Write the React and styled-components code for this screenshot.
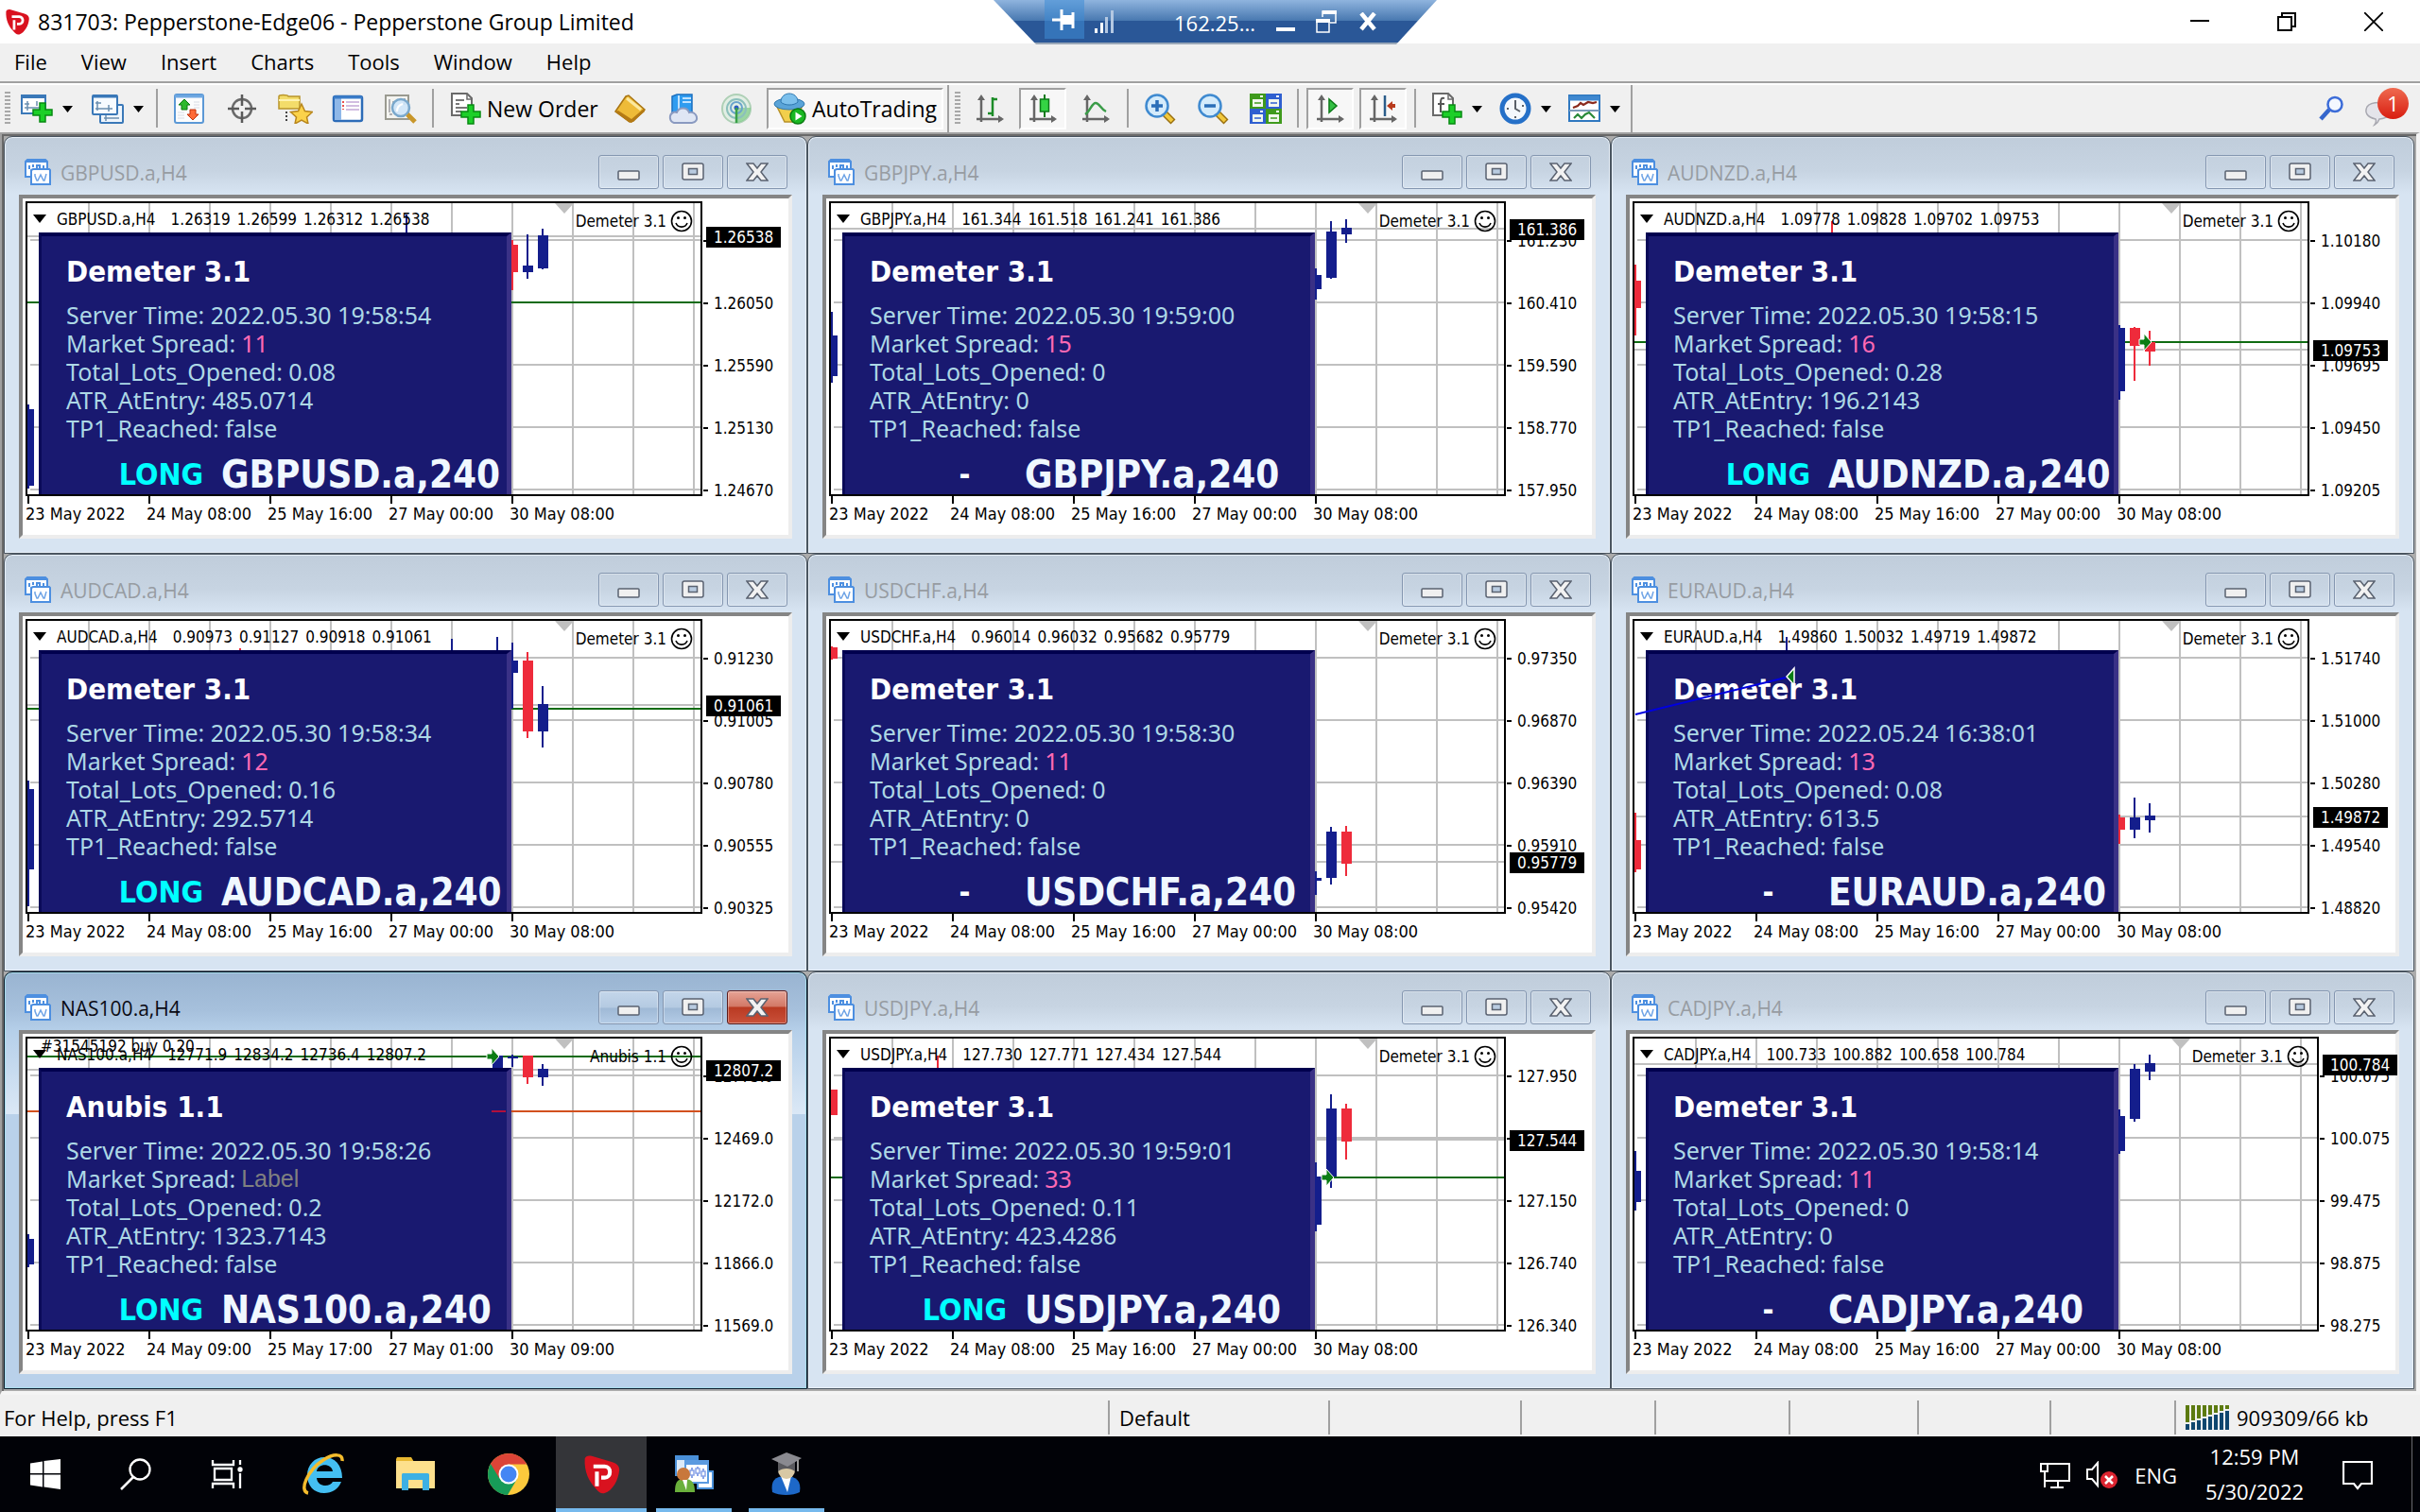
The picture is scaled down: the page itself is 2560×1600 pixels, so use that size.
import React from "react";
import styled, { createGlobalStyle, css } from "styled-components";

const UI_FONT = `"Open Sans", "Noto Sans", sans-serif`;
const CHART_FONT = `"DejaVu Sans Condensed", "Noto Sans", sans-serif`;
const PANEL_FONT = `"Noto Sans", "Open Sans", sans-serif`;
const BLUE = "#141e8c";
const RED = "#ee2b3b";
const GREEN = "#0f6b12";

const GlobalStyle = createGlobalStyle`
  * { box-sizing: border-box; }
  html, body { margin: 0; padding: 0; }
  body { background: #f0f0f0; font-family: ${UI_FONT}; font-size: 22px; color: #000; overflow: hidden; }
  button { font: inherit; color: inherit; border: 0; background: none; padding: 0; margin: 0; }
  svg { display: block; flex: none; }
`;

/* ---------- page frame ---------- */

const Page = styled.div`
  display: flex;
  flex-direction: column;
  height: 100vh;
  min-width: 1800px;
`;

const TitleBar = styled.header`
  display: flex;
  align-items: center;
  height: 46px;
  padding: 0 3px 0 4px;
  gap: 8px;
  background: #fff;
`;

const AppTitle = styled.h1`
  flex: 1;
  margin: 0;
  font-size: 23px;
  font-weight: 400;
  line-height: 32px;
  white-space: nowrap;
`;

const CaptionButton = styled.button`
  display: flex;
  align-items: center;
  justify-content: center;
  width: 92px;
  height: 46px;
`;
const Captions = styled.div`display: flex;`;

const MenuBar = styled.nav`
  display: flex;
  align-items: center;
  gap: 36px;
  height: 40px;
  padding: 0 0 2px 15px;
  background: #f0f0f0;
`;

const MenuItem = styled.button`
  line-height: 32px;
`;

const Toolbar = styled.div`
  display: flex;
  align-items: stretch;
  height: 54px;
  border-top: 2px solid #a0a0a0;
  box-shadow: inset 0 2px 0 #fff;
  background: #f0f0f0;
  padding: 2px 0 0 5px;
`;

const Grip = styled.span`
  width: 6px;
  margin: 7px 0;
  background: repeating-linear-gradient(#a8a8a8 0 2px, #f0f0f0 2px 4px);
`;

const Separator = styled.span`
  width: 2px;
  margin: ${(p) => (p.$full ? "0 6px 0 4px" : "4px 5px 5px")};
  background: #a0a0a0;
`;

const ToolGroup = styled.div`
  display: flex;
  align-items: center;
  gap: ${(p) => p.$gap || 0}px;
  padding-left: ${(p) => p.$left || 0}px;
  padding-right: ${(p) => p.$right || 0}px;
`;

const pressed = css`
  border-top: 2px solid #a0a0a0;
  border-left: 2px solid #a0a0a0;
  border-right: 2px solid #fff;
  border-bottom: 2px solid #fff;
  background: #f7f7f7;
`;

const ToolButton = styled.button`
  display: flex;
  align-items: center;
  justify-content: center;
  width: 50px;
  height: 44px;
  margin: 0 3px;
  ${(p) => p.$pressed && pressed}
`;

const DropButton = styled.button`
  display: flex;
  align-items: center;
  gap: 10px;
  height: 44px;
`;

const TextToolButton = styled.button`
  display: flex;
  align-items: center;
  gap: 6px;
  height: 44px;
  width: ${(p) => p.$width}px;
  padding-left: ${(p) => (p.$pressed ? 5 : 12)}px;
  margin-left: ${(p) => (p.$pressed ? 4 : 0)}px;
  font-size: 23px;
  white-space: nowrap;
  ${(p) => p.$pressed && pressed}
`;

const ToolbarEnd = styled.div`
  display: flex;
  align-items: center;
  gap: 22px;
  margin-left: auto;
  padding-right: 12px;
`;

const AlertButton = styled.button`
  position: relative;
  width: 46px;
  height: 44px;
`;

const AlertCount = styled.span`
  position: absolute;
  right: 0;
  top: 0;
  width: 33px;
  height: 33px;
  border-radius: 50%;
  background: linear-gradient(#ef6a50, #d81d10);
  color: #fff;
  line-height: 32px;
  text-align: center;
`;

/* ---------- remote session bar ---------- */

const SessionBar = styled.div`
  position: absolute;
  top: 0;
  left: calc(50% - 229px);
  display: flex;
  align-items: center;
  width: 469px;
  height: 47px;
  padding: 0 62px 2px 54px;
  clip-path: polygon(0 0, 100% 0, 426px 100%, 45px 100%);
  background: linear-gradient(#8fb4de 0, #4878b0 22px, #2a5797 22px, #2a5797 45px, #9aa8b8 45px);
  color: #fff;
`;

const PinButton = styled.button`
  display: flex;
  align-items: center;
  justify-content: center;
  align-self: flex-start;
  width: 42px;
  height: 41px;
  margin-right: 10px;
  background: rgba(62, 140, 214, 0.55);
`;

const SessionHost = styled.span`
  flex: 1;
  padding: 2px 22px 0 0;
  text-align: right;
`;

const SessionButtons = styled.div`
  display: flex;
  gap: 22px;
  align-items: center;
`;

/* ---------- chart windows ---------- */

const Workspace = styled.main`
  flex: 1;
  min-height: 0;
  display: grid;
  grid-template-columns: repeat(3, minmax(0, 1fr));
  grid-template-rows: repeat(3, minmax(0, 1fr));
  padding: 2px;
  border-style: solid;
  border-width: 2px 4px 4px 2px;
  border-color: #a0a0a0 #f4f4f4 #f4f4f4 #a0a0a0;
  background: #ababab;
  box-shadow: inset 0 2px 0 #696969, inset 2px 0 0 #696969;
`;

const Window = styled.section`
  display: flex;
  flex-direction: column;
  min-width: 0;
  border: 1px solid ${(p) => (p.$active ? "#0c1c2c" : "#4a5560")};
  border-radius: 9px 9px 0 0;
  padding: 0 15px 15px;
  background: ${(p) =>
    p.$active
      ? "linear-gradient(#99b4d1 0, #a6c0dc 40px, #b5cfe9 62px, #dbe8f6 150px, #b9d1ea 150px)"
      : "linear-gradient(#c0cddb 0, #c7d4e2 36px, #d7e4f2 60px)"};
  box-shadow: inset 0 0 0 1px ${(p) => (p.$active ? "#a8dcea" : "#e8f0f8")};
`;

const WindowHeader = styled.header`
  display: flex;
  align-items: flex-start;
  height: 61px;
  padding: 19px 5px 0 6px;
`;

const ChartIconBox = styled.span`
  display: block;
  padding-top: 4px;
`;

const WindowTitle = styled.h2`
  flex: 1;
  margin: 0 0 0 10px;
  font-size: 21px;
  font-weight: 400;
  line-height: 38px;
  color: ${(p) => (p.$active ? "#0a0a14" : "#979ca2")};
`;

const WindowButtons = styled.div`
  display: flex;
  gap: 4px;
`;

const WindowButton = styled.button`
  display: flex;
  align-items: center;
  justify-content: center;
  width: 64px;
  height: 36px;
  border: 1px solid #8496b0;
  border-radius: 3px;
  box-shadow: inset 0 0 0 1px rgba(255, 255, 255, 0.35);
  background: ${(p) => (p.$active ? "linear-gradient(#c4d6ea 0, #b4cae2 17px, #9fb9d6 18px, #b4cce6 100%)" : "none")};
  ${(p) =>
    p.$close &&
    p.$active &&
    css`
      border-color: #5a1a1a;
      background: linear-gradient(#e6a496 0, #d27866 16px, #b93a22 17px, #c9503a 100%);
    `}
`;

const Client = styled.div`
  flex: 1;
  min-height: 0;
  display: grid;
  grid-template-columns: minmax(0, 1fr) ${(p) => p.$axis}px;
  grid-template-rows: minmax(0, 1fr) 41px;
  padding: 3px 0 0 3px;
  background: #fff;
  border: 4px solid;
  border-color: #858585 #ededed #ededed #858585;
  font-family: ${CHART_FONT};
  font-size: 17px;
`;

const Plot = styled.div`
  position: relative;
  border: 2px solid #000;
`;

const Backdrop = styled.svg`
  position: absolute;
  inset: 0;
  width: 100%;
  height: 100%;
  overflow: hidden;
`;

const PlotHeader = styled.div`
  position: relative;
  display: flex;
  align-items: center;
  height: 33px;
  padding: 0 8px 0 6px;
  line-height: 24px;
  white-space: nowrap;
`;

const Quotes = styled.div`
  display: flex;
  flex: 1;
  gap: 7px;
  margin-left: 11px;
`;

const Symbol = styled.span`margin-right: 9px;`;

const Expert = styled.div`
  display: flex;
  align-items: center;
  gap: 4px;
  padding-top: 5px;
`;

const ShiftMark = styled.svg`
  position: absolute;
  top: 0;
  right: 134px;
`;

const OrderNote = styled.span`
  position: absolute;
  left: 14px;
  top: -4px;
  line-height: 24px;
  white-space: nowrap;
`;

const Panel = styled.div`
  position: absolute;
  left: 12px;
  top: 31px;
  bottom: 0;
  width: 500px;
  padding: 17px 0 0 26px;
  background: #191970;
  border-top: 4px solid #00004e;
  border-left: 3px solid #0a0a58;
  border-right: 5px solid #3a3186;
  color: #add8e6;
  font-family: ${PANEL_FONT};
  font-size: 25px;
  line-height: 30px;
  white-space: nowrap;
`;

const PanelTitle = styled.h3`
  margin: 0 0 11px;
  color: #fff;
  font-family: ${CHART_FONT};
  font-size: 31px;
  font-weight: 700;
  line-height: 40px;
`;

const PanelLine = styled.p`
  display: flex;
  gap: 6px;
  margin: 0;
`;

const Spread = styled.span`
  color: #ff69b4;
`;
const SpreadLabel = styled.span`
  color: #808080;
  font-family: "Liberation Sans", sans-serif;
`;

const PanelFooter = styled.div`
  display: flex;
  align-items: center;
  gap: 18px;
  height: 40px;
  margin: 14px 0 0 55px;
  font-family: ${CHART_FONT};
  line-height: 40px;
  font-weight: 700;
`;

const Side = styled.span`
  width: 91px;
  text-align: center;
  font-size: 32px;
  color: ${(p) => (p.$long ? "#00ffff" : "#fff")};
`;

const Pair = styled.span`
  font-size: 40px;
  color: #f0f8ff;
`;

const PriceAxis = styled.div`
  position: relative;
  padding-top: 9px;
`;

const PriceLabel = styled.div`
  display: flex;
  align-items: center;
  gap: 6px;
  height: 66px;
  padding-left: 1px;

  &::before {
    content: "";
    width: 5px;
    height: 2px;
    background: #000;
  }
`;

const PriceTag = styled.div`
  position: absolute;
  left: 4px;
  width: 79px;
  height: 22px;
  padding-left: 8px;
  background: #000;
  color: #fff;
  line-height: 22px;
`;

const DateAxis = styled.div`
  display: flex;
  font-size: 18px;
`;

const DateLabel = styled.div`
  width: 128px;
  line-height: 22px;
  white-space: nowrap;

  &::before {
    content: "";
    display: block;
    width: 2px;
    height: 8px;
    margin-left: 2px;
    background: #000;
  }
`;

/* ---------- status bar and task bar ---------- */

const StatusBar = styled.footer`
  display: flex;
  align-items: center;
  height: 44px;
  background: #f0f0f0;
`;

const StatusCell = styled.div`
  display: flex;
  align-items: center;
  gap: 8px;
  height: 36px;
  margin-top: 4px;
  line-height: 32px;
  white-space: nowrap;
  ${(p) =>
    p.$width
      ? css`width: ${p.$width}px; padding-left: 10px; border-left: 2px solid #a0a0a0;`
      : css`flex: 1; padding-left: 4px;`}
`;

const TaskBar = styled.footer`
  display: flex;
  height: 80px;
  background: #010207;
  color: #fff;
`;

const TaskButton = styled.button`
  display: flex;
  align-items: center;
  justify-content: center;
  width: 96px;
  background: ${(p) => (p.$focused ? "#343539" : "none")};
`;

const TaskApps = styled.div`
  display: flex;
  gap: 2px;
  margin-left: 6px;
`;

const RunningButton = styled(TaskButton)`
  position: relative;
  &::after {
    content: "";
    position: absolute;
    bottom: 0;
    left: ${(p) => (p.$focused ? 0 : 8)}px;
    right: ${(p) => (p.$focused ? 0 : 8)}px;
    height: 4px;
    background: #76b9ed;
  }
`;

const Tray = styled.div`
  display: flex;
  align-items: center;
  margin-left: auto;
  gap: 17px;
`;

const TrayButton = styled.button`
  padding-top: 2px;
`;

const Clock = styled.time`
  display: block;
  width: 112px;
  margin: 0 20px 0 9px;
  text-align: center;
  line-height: 37px;
`;

const ShowDesktop = styled.button`
  width: 9px;
  height: 80px;
  margin-left: 24px;
  border-left: 1px solid #6a6a6e;
`;

/* ---------- icons ---------- */

const Caret = () => (
  <svg width="11" height="7" viewBox="0 0 11 7"><path d="M0 0h11L5.5 7z" /></svg>
);

const Plus = ({ x, y }) => (
  <path
    transform={`translate(${x} ${y})`}
    d="M7 0h6v7h7v6h-7v7H7v-7H0V7h7z"
    fill="#1ccf28"
    stroke="#078a12"
    strokeWidth="1.5"
  />
);

const PepperLogo = ({ w, h }) => (
  <svg width={w} height={h} viewBox="0 0 44 46">
    <path d="M3 5C4 2 7 1 11 2l24 7c6 2 8 5 8 9-1 12-8 24-17 27-4 1-7-1-10-5C8 32 2 20 3 5z" fill="#d9121f" />
    <path d="M17 37V20M13 14h13c8 0 8 13 0 13h-4" fill="none" stroke="#fff" strokeWidth="4.5" />
  </svg>
);

const ChartWinIcon = () => (
  <svg width="28" height="28" viewBox="0 0 28 28">
    <path d="M1 3l2-2h19l2 2v16H1z" fill="#fff" stroke="#4d8fe0" strokeWidth="2" />
    <path d="M2 3h21" stroke="#4d8fe0" strokeWidth="2" />
    <path d="M5 11V7M9 9V6M13 10V7h3v3M20 10V7" stroke="#4d8fe0" strokeWidth="2" fill="none" />
    <path d="M7 12l2-1h17l1 1v15H7z" fill="#fff" stroke="#4d8fe0" strokeWidth="2" />
    <path d="M11 16v2l2 5h1l3-6 3 6h1l2-7" stroke="#6fa4e6" strokeWidth="1.5" fill="none" />
  </svg>
);

const NewChart = () => (
  <svg width="34" height="32" viewBox="0 0 34 32">
    <rect x="1" y="2" width="25" height="19" fill="#fff" stroke="#3a78b8" strokeWidth="2" />
    <path d="M0 3h27" stroke="#3a78b8" strokeWidth="4" />
    <path d="M7 8v10M4 15h17M4 11h5M17 8v5" stroke="#6b8fb0" strokeWidth="1.5" />
    <Plus x={13} y={10} />
  </svg>
);
const Profiles = () => (
  <svg width="34" height="32" viewBox="0 0 34 32">
    <rect x="9" y="12" width="24" height="19" rx="1" fill="#eef5fc" stroke="#3a78b8" strokeWidth="2" />
    <rect x="1" y="2" width="26" height="20" rx="1" fill="#f7fbff" stroke="#3a78b8" strokeWidth="2" />
    <path d="M1 3h26" stroke="#3a78b8" strokeWidth="3" />
    <path d="M6 8v10M4 16h18M4 10h6M18 12v7M13 26h16M15 23v6" stroke="#6b8fb0" strokeWidth="1.5" />
  </svg>
);
const MarketWatch = () => (
  <svg width="34" height="32" viewBox="0 0 34 32">
    <rect x="2" y="1" width="30" height="30" rx="2" fill="#fbfcfd" stroke="#5b98d6" strokeWidth="2" />
    <path d="M2 3h30" stroke="#6fa8e2" strokeWidth="3" />
    <path d="M22 9h6M22 12h6M22 15h6M5 20h7M5 23h7M5 26h7" stroke="#d8dce4" />
    <path d="M12 6l6 6h-3v5H9v-5H6z" fill="#2eb82e" stroke="#0d7a12" />
    <path d="M21 28l6-6h-3v-5h-6v5h-3z" fill="#ff6a36" stroke="#c2330c" />
  </svg>
);
const Crosshair = () => (
  <svg width="34" height="32" viewBox="0 0 34 32">
    <circle cx="17" cy="16" r="10" fill="none" stroke="#6a6a6a" strokeWidth="2.5" />
    <path d="M17 1v12M17 19v12M2 16h12M20 16h12" stroke="#5a5a5a" strokeWidth="2.5" />
  </svg>
);
const Navigator = () => (
  <svg width="38" height="32" viewBox="0 0 38 32">
    <path d="M2 3c0-2 9-2 10 0h12v13H2z" fill="#f3dc6a" stroke="#b8942a" strokeWidth="1.5" />
    <path d="M2 7h22" stroke="#fff3b0" strokeWidth="2" />
    <path d="M10 19v11" stroke="#444" strokeDasharray="2 2" strokeWidth="2" />
    <path d="M26 11l3.5 7.5 8 1-6 5.5 1.5 7-7-4-7 4 1.5-7-6-5.5 8-1z" fill="#fbd24a" stroke="#b8861c" strokeWidth="1.5" />
  </svg>
);
const DataWindow = () => (
  <svg width="34" height="32" viewBox="0 0 34 32">
    <rect x="2" y="3" width="30" height="26" rx="2" fill="#fff" stroke="#2d6cb8" strokeWidth="2.5" />
    <rect x="3" y="4" width="7" height="24" fill="#8fb8e8" />
    <path d="M2 4h30" stroke="#3a7cc8" strokeWidth="3" />
    <path d="M12 8v9" stroke="#e01818" strokeWidth="1.5" strokeDasharray="2 2" />
    <path d="M15 9h14M15 13h14M15 17h14" stroke="#c4a8d8" strokeWidth="1.5" />
  </svg>
);
const Tester = () => (
  <svg width="34" height="32" viewBox="0 0 34 32">
    <path d="M1 2h24v25H1z" fill="#f4f4f0" stroke="#9a9a90" strokeWidth="2" />
    <path d="M5 6v14M9 8v5M21 5v7M5 22h3" stroke="#9a9aa0" strokeWidth="1.5" />
    <circle cx="17" cy="15" r="9" fill="#cfe6f8" fillOpacity=".9" stroke="#7aa8cc" strokeWidth="2.5" />
    <path d="M24 22l8 8" stroke="#c8962a" strokeWidth="5" />
    <path d="M13 19c0-4 2-7 6-8" stroke="#fff" strokeWidth="2" fill="none" />
  </svg>
);
const Sheet = () => (
  <>
    <path d="M2 2h16l5 5v18H2z" fill="#fff" stroke="#6a6a6a" strokeWidth="2" />
    <path d="M18 2v6h5" fill="none" stroke="#6a6a6a" strokeWidth="1.5" />
  </>
);
const NewOrderIcon = () => (
  <svg width="33" height="36" viewBox="0 0 33 36">
    <Sheet />
    <path d="M6 9h9M6 13h4M6 17h12M6 21h6" stroke="#777" strokeWidth="2" />
    <Plus x={12} y={14} />
  </svg>
);
const Editor = () => (
  <svg width="34" height="32" viewBox="0 0 34 32">
    <path d="M1 19L12 3l3-1 17 15-12 12-4 1z" fill="#eebb38" stroke="#a87412" strokeWidth="1.5" />
    <path d="M1 19l3-1 14 9 13-11 1 3-14 12-3-1z" fill="#b47a14" />
    <path d="M13 5l15 12" stroke="#fce9a0" strokeWidth="3" />
  </svg>
);
const Hosting = () => (
  <svg width="34" height="32" viewBox="0 0 34 32">
    <path d="M5 3l5-2h16v20H5z" fill="#2f9cf0" stroke="#1d70c0" strokeWidth="1.5" />
    <path d="M12 2v18M16 5h9M16 9h9" stroke="#bfe2ff" strokeWidth="2" />
    <path d="M7 31a6 6 0 0 1-1-11c2-1 3 0 4 0 2-6 11-6 13 0 8-2 12 10 3 11z" fill="#dfe6f4" stroke="#8a9ac0" strokeWidth="2" />
  </svg>
);
const Signals = () => (
  <svg width="34" height="32" viewBox="0 0 34 32">
    <circle cx="17" cy="16" r="15" fill="#e2eee4" stroke="#aed0b6" strokeWidth="2" />
    <path d="M17 15h15c0 8-6 15-14 16z" fill="#7ccc84" fillOpacity=".7" />
    <circle cx="17" cy="16" r="10" fill="none" stroke="#8cc0bc" strokeWidth="2" />
    <circle cx="17" cy="15" r="6" fill="none" stroke="#6aa4cc" strokeWidth="2" />
    <circle cx="17" cy="15" r="2.5" fill="#2a5cc0" />
    <path d="M17 15v16" stroke="#3aa048" strokeWidth="2.5" />
  </svg>
);
const AutoIcon = () => (
  <svg width="35" height="34" viewBox="0 0 35 34">
    <path d="M3 13h28l-7 18H12z" fill="#f2cf4c" stroke="#b8922a" strokeWidth="1.5" />
    <ellipse cx="17" cy="12" rx="16" ry="6" fill="#5aa4d8" stroke="#2f78b0" />
    <path d="M8 10c0-12 18-12 18 0-4 4-14 4-18 0z" fill="#7cc0ec" stroke="#2f78b0" />
    <circle cx="26" cy="25" r="8" fill="#19b822" stroke="#0a7a10" strokeWidth="1.5" />
    <path d="M23.5 20.5v9l7-4.5z" fill="#fff" />
  </svg>
);
const Axes = ({ children }) => (
  <svg width="30" height="30" viewBox="0 0 30 30">
    <path d="M6 3v26M1 26h27" stroke="#666" strokeWidth="2.5" />
    <path d="M6 0l4 6H2zM30 26l-6-4v8z" fill="#666" />
    {children}
  </svg>
);
const Magnifier = ({ minus }) => (
  <svg width="34" height="34" viewBox="0 0 34 34">
    <path d="M22 22l9 9" stroke="#9a7010" strokeWidth="7" />
    <path d="M22 22l8 8" stroke="#f2c83c" strokeWidth="4" />
    <circle cx="14" cy="14" r="11.5" fill="#d4ebfb" stroke="#3f8ad0" strokeWidth="2.5" />
    <path d={minus ? "M8 14h12" : "M8 14h12M14 8v12"} stroke="#2a6eb8" strokeWidth="3.5" />
  </svg>
);
const Tiles = () => (
  <svg width="34" height="32" viewBox="0 0 34 32">
    {[[0, 0, "#3f9a1c"], [17, 0, "#2f5fd0"], [0, 16, "#2f5fd0"], [17, 16, "#3f9a1c"]].map(([x, y, c]) => (
      <g key={`${x}-${y}`} transform={`translate(${x} ${y})`}>
        <path d="M0 0h17v16H0z" fill={c} />
        <path d="M3 6h11v8H3z" fill="#f2f7ee" />
        <path d="M5 10h7" stroke={c} strokeWidth="1.5" />
        <path d="M11 3h3" stroke="#fff" strokeWidth="2" />
      </g>
    ))}
  </svg>
);
const Indicators = () => (
  <svg width="33" height="36" viewBox="0 0 33 36">
    <Sheet />
    <path d="M14 7c-4-1-4 2-4 6v9M7 13h7" stroke="#555" strokeWidth="2" fill="none" />
    <Plus x={12} y={14} />
  </svg>
);
const ClockIcon = () => (
  <svg width="34" height="34" viewBox="0 0 34 34">
    <circle cx="17" cy="17" r="14" fill="#f4f8fc" stroke="#2570c8" strokeWidth="5" />
    <path d="M17 8v9l5 3M8 17h2M17 27v-2M26 14h-2" stroke="#5a6068" strokeWidth="2" fill="none" />
  </svg>
);
const Templates = () => (
  <svg width="34" height="30" viewBox="0 0 34 30">
    <rect x="1" y="1" width="32" height="27" fill="#fff" stroke="#2f78c0" strokeWidth="2" />
    <path d="M1 4h32" stroke="#3f88d0" strokeWidth="5" />
    <path d="M1 17h32" stroke="#7a9ab8" strokeWidth="2" />
    <path d="M5 14l5-2 3-3 3 2 5-3 5 1 4-1" stroke="#8a2a1c" strokeWidth="2.2" fill="none" />
    <path d="M6 25l4-4 4 4 4-4 4-2 6 6" stroke="#2a8a3a" strokeWidth="2.2" fill="none" />
  </svg>
);
const SearchIcon = () => (
  <svg width="28" height="28" viewBox="0 0 28 28">
    <path d="M12 15L3 25" stroke="#3566cc" strokeWidth="4.5" />
    <circle cx="18" cy="9.5" r="7.5" fill="#f4f8ff" stroke="#3c6cd8" strokeWidth="2.5" />
  </svg>
);
const Bubble = () => (
  <svg width="46" height="44" viewBox="0 0 46 44">
    <path d="M10 39c2-3 2-4 1-6C2 31-1 26 2 20 6 14 24 14 27 20c3 7-3 12-12 13-1 3-3 5-5 6z" fill="#e4e4ea" stroke="#a8a8b0" strokeWidth="1.5" />
  </svg>
);

const MinGlyph = () => (
  <svg width="24" height="22" viewBox="0 0 24 22">
    <rect x="1" y="10" width="22" height="9" rx="1" fill="#f0f0f0" stroke="#5a6270" strokeWidth="1.5" />
  </svg>
);
const MaxGlyph = () => (
  <svg width="24" height="20" viewBox="0 0 24 20">
    <rect x="1" y="1" width="22" height="17" rx="2" fill="#f0f0f0" stroke="#5a6270" strokeWidth="1.5" />
    <rect x="7.5" y="6.5" width="9" height="6" fill="#b9cbe0" stroke="#5a6270" strokeWidth="1.5" />
  </svg>
);
const CloseGlyph = () => (
  <svg width="24" height="20" viewBox="0 0 24 20">
    <path d="M1 1h7l4 5 4-5h7l-7 9 7 9h-7l-4-5-4 5H1l7-9z" fill="#f2f2f2" stroke="#5a6270" strokeWidth="1.5" />
  </svg>
);
const Smiley = () => (
  <svg width="24" height="24" viewBox="0 0 24 24">
    <circle cx="12" cy="12" r="10.5" fill="none" stroke="#000" strokeWidth="1.6" />
    <path d="M6 14c2 5.5 10 5.5 12 0" fill="none" stroke="#000" strokeWidth="1.6" />
    <circle cx="8.5" cy="8.5" r="1.5" /><circle cx="15.5" cy="8.5" r="1.5" />
  </svg>
);

/* ---------- chart data: candles are [x, high, top, bottom, low, colour] ---------- */

const H8 = ["23 May 2022", "24 May 08:00", "25 May 16:00", "27 May 00:00", "30 May 08:00"];
const H9 = ["23 May 2022", "24 May 09:00", "25 May 17:00", "27 May 01:00", "30 May 09:00"];

const CHARTS = [
  {
    symbol: "GBPUSD.a", quotes: ["1.26319", "1.26599", "1.26312", "1.26538"], time: "2022.05.30 19:58:54",
    spread: "11", lots: "0.08", atr: "485.0714", long: true, price: 35, line: 105,
    axis: ["", "1.26050", "1.25590", "1.25130", "1.24670"],
    candles: [[1, 213, 218, 299, 302, BLUE], [513, 39, 44, 73, 92, RED], [529, 33, 66, 73, 80, BLUE], [545, 27, 34, 69, 70, BLUE]],
    wicks: [[401, 12, BLUE]],
  },
  {
    symbol: "GBPJPY.a", quotes: ["161.344", "161.518", "161.241", "161.386"], time: "2022.05.30 19:59:00",
    spread: "15", lots: "0", atr: "0", price: 27,
    axis: ["161.230", "160.410", "159.590", "158.770", "157.950"],
    candles: [[1, 115, 140, 183, 190, BLUE], [513, 69, 76, 91, 102, BLUE], [529, 19, 30, 79, 80, BLUE], [545, 17, 26, 33, 42, BLUE]],
  },
  {
    symbol: "AUDNZD.a", quotes: ["1.09778", "1.09828", "1.09702", "1.09753"], time: "2022.05.30 19:58:15",
    spread: "16", lots: "0.28", atr: "196.2143", long: true, price: 155, line: 147, arrow: [534, 147],
    axis: ["1.10180", "1.09940", "1.09695", "1.09450", "1.09205"],
    candles: [[1, 65, 82, 111, 140, RED], [513, 129, 132, 199, 208, BLUE], [529, 131, 132, 151, 188, RED], [545, 135, 147, 157, 172, RED]],
    wicks: [[209, 19, RED]],
  },
  {
    symbol: "AUDCAD.a", quotes: ["0.90973", "0.91127", "0.90918", "0.91061"], time: "2022.05.30 19:58:34",
    spread: "12", lots: "0.16", atr: "292.5714", long: true, price: 89, line: 93,
    axis: ["0.91230", "0.91005", "0.90780", "0.90555", "0.90325"],
    candles: [[1, 169, 178, 263, 302, BLUE], [513, 23, 42, 55, 93, BLUE], [529, 33, 42, 117, 124, RED], [545, 69, 88, 117, 134, BLUE]],
    wicks: [[449, 19, BLUE], [497, 17, BLUE], [225, 29, RED]],
  },
  {
    symbol: "USDCHF.a", quotes: ["0.96014", "0.96032", "0.95682", "0.95779"], time: "2022.05.30 19:58:30",
    spread: "11", lots: "0", atr: "0", price: 255,
    axis: ["0.97350", "0.96870", "0.96390", "0.95910", "0.95420"],
    candles: [[1, 27, 28, 40, 41, RED], [513, 265, 272, 275, 290, BLUE], [529, 218, 223, 272, 279, BLUE], [545, 217, 223, 257, 270, RED]],
  },
  {
    symbol: "EURAUD.a", quotes: ["1.49860", "1.50032", "1.49719", "1.49872"], time: "2022.05.24 16:38:01",
    spread: "13", lots: "0.08", atr: "613.5", price: 207, trend: true,
    axis: ["1.51740", "1.51000", "1.50280", "1.49540", "1.48820"],
    candles: [[1, 203, 232, 263, 266, RED], [513, 205, 208, 221, 236, RED], [529, 187, 208, 221, 230, BLUE], [545, 193, 206, 211, 224, BLUE]],
    wicks: [[161, 17, BLUE]],
  },
  {
    symbol: "NAS100.a", expert: "Anubis 1.1", quotes: ["12771.9", "12834.2", "12736.4", "12807.2"], time: "2022.05.30 19:58:26",
    lots: "0.2", atr: "1323.7143", long: true, active: true, price: 33, line: 19, stop: 77, arrow: [486, 19],
    note: "#31545192 buy 0.20", dates: H9,
    axis: ["12775.0", "12469.0", "12172.0", "11866.0", "11569.0"],
    candles: [[1, 207, 212, 239, 242, BLUE], [497, 17, 18, 32, 32, BLUE], [513, 17, 19, 21, 30, BLUE], [529, 18, 18, 41, 48, RED], [545, 27, 32, 41, 50, BLUE]],
  },
  {
    symbol: "USDJPY.a", quotes: ["127.730", "127.771", "127.434", "127.544"], time: "2022.05.30 19:59:01",
    spread: "33", lots: "0.11", atr: "423.4286", long: true, price: 107, line: 147, arrow: [519, 147],
    axis: ["127.950", "", "127.150", "126.740", "126.340"],
    candles: [[1, 54, 54, 81, 81, RED], [513, 131, 146, 197, 204, BLUE], [529, 59, 74, 146, 158, BLUE], [545, 69, 74, 109, 128, RED]],
    wicks: [[113, 18, RED]],
  },
  {
    symbol: "CADJPY.a", quotes: ["100.733", "100.882", "100.658", "100.784"], time: "2022.05.30 19:58:14",
    spread: "11", lots: "0", atr: "0", price: 27, axisWidth: 81,
    axis: ["100.675", "100.075", "99.475", "98.875", "98.275"],
    candles: [[1, 119, 140, 173, 182, BLUE], [513, 75, 82, 119, 122, BLUE], [529, 27, 32, 85, 88, BLUE], [545, 17, 26, 35, 44, BLUE]],
  },
];

const COLS = Array.from({ length: 11 }, (_, i) => 64 + i * 64);
const ROWS = [38, 104, 170, 236, 302];

function ChartDrawing({ c }) {
  return (
    <Backdrop aria-hidden="true" shapeRendering="crispEdges">
      {COLS.map((x) => <rect key={x} x={x} y="0" width="2" height="100%" fill="#c0c0c0" />)}
      {ROWS.map((y) => <rect key={y} x="3" y={y} width="100%" height="2" fill="#c0c0c0" />)}
      <rect x="0" y={c.price - 1} width="100%" height="2" fill="#c0c0c0" />
      {c.line && <rect x="0" y={c.line - 1} width="100%" height="2" fill={GREEN} />}
      {c.stop && <rect x="0" y={c.stop - 1} width="100%" height="2" fill="#d2501e" />}
      {(c.wicks || []).map(([x, y, f]) => <rect key={x} x={x - 1} y={y} width="2" height={31 - y} fill={f} />)}
      {c.candles.map(([x, hi, top, bot, lo, f]) => (
        <g key={x} fill={f}>
          <rect x={x - 1} y={hi} width="2" height={lo - hi} />
          <rect x={x - 5} y={top} width="11" height={Math.max(bot - top, 1)} />
        </g>
      ))}
    </Backdrop>
  );
}

function Marks({ c }) {
  return (
    <Backdrop aria-hidden="true">
      {c.arrow && (
        <path
          transform={`translate(${c.arrow[0]} ${c.arrow[1]})`}
          d="M0-3h5v-6l8 9-8 9V3H0z"
          fill="#0b7d14"
          stroke="#fff"
          strokeWidth="1"
        />
      )}
      {c.trend && (
        <>
          <path d="M1 99L160 60" stroke="#0000e0" strokeWidth="2" />
          <path d="M169 50v18l-8-9z" fill="#0b7d14" stroke="#fff" strokeWidth="1.5" />
        </>
      )}
      {c.stop && <path d="M491 77h15" stroke="#b0103c" strokeWidth="2" />}
    </Backdrop>
  );
}

function ChartWindow({ c }) {
  const expert = c.expert || "Demeter 3.1";
  return (
    <Window $active={c.active}>
      <WindowHeader>
        <ChartIconBox><ChartWinIcon /></ChartIconBox>
        <WindowTitle $active={c.active}>{c.symbol},H4</WindowTitle>
        <WindowButtons>
          <WindowButton $active={c.active} aria-label="Minimize chart"><MinGlyph /></WindowButton>
          <WindowButton $active={c.active} aria-label="Maximize chart"><MaxGlyph /></WindowButton>
          <WindowButton $active={c.active} $close aria-label="Close chart"><CloseGlyph /></WindowButton>
        </WindowButtons>
      </WindowHeader>
      <Client $axis={c.axisWidth || 91}>
        <Plot>
          <ChartDrawing c={c} />
          <ShiftMark width="20" height="11" viewBox="0 0 20 11"><path d="M0 0h20L10 11z" fill="#c0c0c0" /></ShiftMark>
          {c.note && <OrderNote>{c.note}</OrderNote>}
          <PlotHeader>
            <svg width="14" height="9" viewBox="0 0 14 9"><path d="M0 0h14L7 9z" /></svg>
            <Quotes>
              <Symbol>{c.symbol},H4</Symbol>
              {c.quotes.map((q) => <span key={q}>{q}</span>)}
            </Quotes>
            <Expert>{expert}<Smiley /></Expert>
          </PlotHeader>
          <Panel>
            <PanelTitle>{expert}</PanelTitle>
            <PanelLine>Server Time: {c.time}</PanelLine>
            <PanelLine>
              Market Spread:
              {c.spread ? <Spread>{c.spread}</Spread> : <SpreadLabel>Label</SpreadLabel>}
            </PanelLine>
            <PanelLine>Total_Lots_Opened: {c.lots}</PanelLine>
            <PanelLine>ATR_AtEntry: {c.atr}</PanelLine>
            <PanelLine>TP1_Reached: false</PanelLine>
            <PanelFooter>
              <Side $long={c.long}>{c.long ? "LONG" : "-"}</Side>
              <Pair>{c.symbol},240</Pair>
            </PanelFooter>
          </Panel>
          <Marks c={c} />
        </Plot>
        <PriceAxis>
          {c.axis.map((v, i) => <PriceLabel key={i}>{v}</PriceLabel>)}
          <PriceTag style={{ top: c.price - 8 }}>{c.quotes[3]}</PriceTag>
        </PriceAxis>
        <DateAxis>
          {(c.dates || H8).map((d) => <DateLabel key={d}>{d}</DateLabel>)}
        </DateAxis>
      </Client>
    </Window>
  );
}

/* ---------- sections ---------- */

function RemoteSession() {
  return (
    <SessionBar>
      <PinButton aria-label="Pin session bar">
        <svg width="26" height="22" viewBox="0 0 26 22"><path d="M0 11h9M10 0v22M22 3v17" stroke="#fff" strokeWidth="3" /><path d="M10 6h12v10H10z" fill="#fff" /></svg>
      </PinButton>
      <svg width="22" height="24" viewBox="0 0 22 24">
        <path d="M1 19h3v5H1zM7 13h3v11H7z" fill="#fff" />
        <path d="M12 7h3v17h-3zM18 0h3v24h-3z" fill="#b4c8e2" />
      </svg>
      <SessionHost>162.25...</SessionHost>
      <SessionButtons>
        <button aria-label="Minimize session"><svg width="20" height="24" viewBox="0 0 20 24"><path d="M0 18h20v4H0z" fill="#fff" /></svg></button>
        <button aria-label="Restore session">
          <svg width="22" height="24" viewBox="0 0 22 24">
            <path d="M7 7V1h14v12h-6" fill="none" stroke="#fff" strokeWidth="1.5" /><path d="M7 0h15v4H7zM0 9h15v4H0z" fill="#fff" />
            <path d="M1 10h13v13H1z" fill="none" stroke="#fff" strokeWidth="1.5" />
          </svg>
        </button>
        <button aria-label="Close session"><svg width="22" height="20" viewBox="0 0 22 20"><path d="M4 1l14 17M18 1L4 18" stroke="#fff" strokeWidth="4.5" /></svg></button>
      </SessionButtons>
    </SessionBar>
  );
}

const Tool = ({ label, on, children }) => (
  <ToolButton aria-label={label} aria-pressed={on} $pressed={on}>{children}</ToolButton>
);
const Drop = ({ label, children }) => (
  <DropButton aria-label={label} aria-haspopup="menu">{children}<Caret /></DropButton>
);

function Tools() {
  return (
    <Toolbar role="toolbar">
      <Grip />
      <ToolGroup $left={11} $right={8} $gap={20}>
        <Drop label="New chart"><NewChart /></Drop>
        <Drop label="Profiles"><Profiles /></Drop>
      </ToolGroup>
      <Separator />
      <ToolGroup>
        <Tool label="Market watch"><MarketWatch /></Tool>
        <Tool label="Crosshair"><Crosshair /></Tool>
        <Tool label="Navigator"><Navigator /></Tool>
        <Tool label="Data window"><DataWindow /></Tool>
        <Tool label="Strategy tester"><Tester /></Tool>
      </ToolGroup>
      <Separator />
      <ToolGroup>
        <TextToolButton $width={175}><NewOrderIcon />New Order</TextToolButton>
        <Tool label="Editor"><Editor /></Tool>
        <Tool label="Hosting"><Hosting /></Tool>
        <Tool label="Signals"><Signals /></Tool>
        <TextToolButton $width={187} $pressed aria-pressed="true"><AutoIcon />AutoTrading</TextToolButton>
      </ToolGroup>
      <Separator $full />
      <Grip />
      <ToolGroup $left={3}>
        <Tool label="Bar chart"><Axes><path d="M18 3v20M18 5h5M13 20h5" stroke="#1c8c28" strokeWidth="2.5" /></Axes></Tool>
        <Tool label="Candlesticks" on><Axes><path d="M17 0v24" stroke="#0c7a18" strokeWidth="2" /><rect x="12.5" y="5" width="9" height="13" fill="#34d444" stroke="#0c7a18" strokeWidth="1.5" /></Axes></Tool>
        <Tool label="Line chart"><Axes><path d="M4 21c5-3 7-12 11-12 4 0 5 6 11 9" fill="none" stroke="#3a9c48" strokeWidth="2.5" /></Axes></Tool>
      </ToolGroup>
      <Separator />
      <ToolGroup>
        <Tool label="Zoom in"><Magnifier /></Tool>
        <Tool label="Zoom out"><Magnifier minus /></Tool>
        <Tool label="Tile windows"><Tiles /></Tool>
      </ToolGroup>
      <Separator />
      <ToolGroup>
        <Tool label="Auto scroll" on><Axes><path d="M14 5v14l8-7z" fill="#34c044" stroke="#0c7a18" strokeWidth="1.5" /></Axes></Tool>
        <Tool label="Chart shift" on><Axes><path d="M17 1v22" stroke="#2a5c8a" strokeWidth="2.5" /><path d="M19 12l6-5v3h3v4h-3v3z" fill="#b83a1c" /></Axes></Tool>
      </ToolGroup>
      <Separator />
      <ToolGroup $left={11} $right={7} $gap={18}>
        <Drop label="Indicators"><Indicators /></Drop>
        <Drop label="Periods"><ClockIcon /></Drop>
        <Drop label="Templates"><Templates /></Drop>
      </ToolGroup>
      <Separator $full />
      <ToolbarEnd>
        <button aria-label="Search"><SearchIcon /></button>
        <AlertButton aria-label="Notifications"><Bubble /><AlertCount>1</AlertCount></AlertButton>
      </ToolbarEnd>
    </Toolbar>
  );
}

const Traffic = () => (
  <svg width="46" height="26" viewBox="0 0 46 26">
    {[0, 1, 2, 3, 4, 5, 6, 7].map((i) => (
      <g key={i}>
        <rect x={i * 6} y="0" width="4" height={18 - i * 2} fill="#5c7a10" />
        <rect x={i * 6} y={20 - i * 2} width="4" height={6 + i * 2} fill="#0f466e" />
      </g>
    ))}
  </svg>
);

const Task = () => (
  <TaskBar>
    <TaskButton aria-label="Start">
      <svg width="32" height="32" viewBox="0 0 32 32"><path d="M0 4.5l13-2V15H0zM14.5 2L32 0v15H14.5zM0 16.5h13v13L0 27.5zM14.5 16.5H32V32l-17.5-2.5z" fill="#fff" /></svg>
    </TaskButton>
    <TaskButton aria-label="Search">
      <svg width="34" height="34" viewBox="0 0 34 34"><circle cx="21" cy="12" r="10.5" fill="none" stroke="#fff" strokeWidth="2.3" /><path d="M14 20L1 33" stroke="#fff" strokeWidth="2.5" /></svg>
    </TaskButton>
    <TaskButton aria-label="Task view">
      <svg width="34" height="32" viewBox="0 0 34 32" fill="none" stroke="#fff" strokeWidth="2.3"><path d="M2 1v5h22V1M4 10h18v12H4zM2 31v-5h22v5M31 1v5M31 15v16" /><circle cx="31" cy="11" r="1.5" fill="#fff" /></svg>
    </TaskButton>
    <TaskApps>
      <TaskButton aria-label="Internet Explorer">
        <svg width="46" height="44" viewBox="0 0 46 44">
          <path d="M24 4c11 0 19 8 19 22H16c1 10 14 10 17 4h9c-3 8-10 12-18 12C13 42 6 34 6 23S14 4 24 4zM16 19h17c-1-9-16-9-17 0z" fill="#44bff2" />
          <path d="M7 42C-3 40 6 18 23 7 34 0 44 0 43 8" fill="none" stroke="#f4bc2c" strokeWidth="3.5" />
        </svg>
      </TaskButton>
      <TaskButton aria-label="File Explorer">
        <svg width="42" height="36" viewBox="0 0 42 36">
          <path d="M0 2l1-2h15l3 5H0z" fill="#e8b830" /><path d="M0 4h41v29H0z" fill="#fde08c" />
          <path d="M6 35V19c0-2 1-2 2-2h25c2 0 2 1 2 2v16h-7v-11H13v11z" fill="#3cb0e4" />
        </svg>
      </TaskButton>
      <TaskButton aria-label="Chrome">
        <svg width="44" height="44" viewBox="0 0 44 44">
          <circle cx="22" cy="22" r="22" fill="#fcc93c" />
          <path d="M22 22L3 11A22 22 0 0 0 21 44l10-17z" fill="#179b58" />
          <path d="M22 11.5h19l-1-2A22 22 0 0 0 3 11l9 15z" fill="#dc4437" />
          <circle cx="22" cy="22" r="10.5" fill="#fff" /><circle cx="22" cy="22" r="8.5" fill="#4486f4" />
        </svg>
      </TaskButton>
      <RunningButton $focused aria-label="Pepperstone MetaTrader"><PepperLogo w={44} h={42} /></RunningButton>
      <RunningButton aria-label="Chart manager">
        <svg width="42" height="40" viewBox="0 0 42 40">
          <rect x="2" y="1" width="23" height="20" fill="#dceaf8" stroke="#4a90d8" strokeWidth="2" /><path d="M2 3h23" stroke="#4a90d8" strokeWidth="4" />
          <rect x="25" y="17" width="16" height="18" fill="#fff" stroke="#4a90d8" strokeWidth="2" />
          <rect x="12" y="6" width="24" height="23" fill="#fff" stroke="#5a9ae0" strokeWidth="2" /><path d="M12 8h24" stroke="#5a9ae0" strokeWidth="4" />
          <path d="M19 13v11M25 12v10M31 14v11" stroke="#8aa4e8" strokeWidth="2" />
          <path d="M17 16h4v5h-4zM23 14h4v5h-4zM29 17h4v5h-4z" fill="#fff" stroke="#8aa4e8" strokeWidth="1.5" />
          <path d="M1 39c0-10 2-14 10-14s11 4 11 14z" fill="#6ab03c" /><circle cx="10" cy="20" r="7" fill="#c8783c" /><path d="M9 26h5l-1 11z" fill="#fff" />
        </svg>
      </RunningButton>
      <RunningButton aria-label="Trading academy">
        <svg width="34" height="46" viewBox="0 0 34 46">
          <path d="M2 42c-2-12 3-17 14-17s17 5 15 17c-7 4-22 4-29 0z" fill="#1d68c8" /><path d="M11 25h11l-4 17z" fill="#fff" />
          <circle cx="17" cy="19" r="9" fill="#d8c8a4" /><path d="M8 9h18v11c-5-4-13-4-18 0z" fill="#5a5a5e" />
          <path d="M1 7L17 0l16 6-15 9z" fill="#8a8a90" /><path d="M29 8v12" stroke="#999" strokeWidth="2" />
        </svg>
      </RunningButton>
    </TaskApps>
    <Tray>
      <TrayButton aria-label="Network">
        <svg width="32" height="28" viewBox="0 0 32 28" fill="none" stroke="#fff" strokeWidth="2"><path d="M9 2h22v18H6M1 2h7v8H1zM5 10v17M19 20v6M11 27h14" /></svg>
      </TrayButton>
      <TrayButton aria-label="Volume muted">
        <svg width="34" height="30" viewBox="0 0 34 30"><path d="M1 9h5l6-7v24l-6-7H1z" fill="none" stroke="#fff" strokeWidth="2" /><circle cx="24" cy="20" r="9" fill="#dc2430" /><path d="M20 16l8 8M28 16l-8 8" stroke="#fff" strokeWidth="2.5" /></svg>
      </TrayButton>
      <TrayButton aria-label="Input language">ENG</TrayButton>
      <Clock>12:59 PM<br />5/30/2022</Clock>
      <TrayButton aria-label="Action center">
        <svg width="32" height="32" viewBox="0 0 32 32"><path d="M1 2h30v23H20l-4 5-4-5H1z" fill="none" stroke="#fff" strokeWidth="2.2" /></svg>
      </TrayButton>
      <ShowDesktop aria-label="Show desktop" />
    </Tray>
  </TaskBar>
);

export default function App() {
  return (
    <Page>
      <GlobalStyle />
      <TitleBar>
        <PepperLogo w={28} h={28} />
        <AppTitle>831703: Pepperstone-Edge06 - Pepperstone Group Limited</AppTitle>
        <Captions>
          <CaptionButton aria-label="Minimize"><svg width="20" height="20" viewBox="0 0 20 20"><path d="M0 9h20" stroke="#000" strokeWidth="2" /></svg></CaptionButton>
          <CaptionButton aria-label="Restore"><svg width="20" height="20" viewBox="0 0 20 20" fill="none" stroke="#000" strokeWidth="2"><path d="M1 5h14v14H1zM5 5V1h14v14h-4" /></svg></CaptionButton>
          <CaptionButton aria-label="Close"><svg width="20" height="20" viewBox="0 0 20 20"><path d="M0 0l20 20M20 0L0 20" stroke="#000" strokeWidth="1.8" /></svg></CaptionButton>
        </Captions>
      </TitleBar>
      <RemoteSession />
      <MenuBar>
        {["File", "View", "Insert", "Charts", "Tools", "Window", "Help"].map((m) => <MenuItem key={m}>{m}</MenuItem>)}
      </MenuBar>
      <Tools />
      <Workspace>
        {CHARTS.map((c) => <ChartWindow key={c.symbol} c={c} />)}
      </Workspace>
      <StatusBar>
        <StatusCell>For Help, press F1</StatusCell>
        <StatusCell $width={233}>Default</StatusCell>
        <StatusCell $width={203} />
        <StatusCell $width={142} />
        <StatusCell $width={142} />
        <StatusCell $width={136} />
        <StatusCell $width={140} />
        <StatusCell $width={132} />
        <StatusCell $width={260}><Traffic />909309/66 kb</StatusCell>
      </StatusBar>
      <Task />
    </Page>
  );
}
